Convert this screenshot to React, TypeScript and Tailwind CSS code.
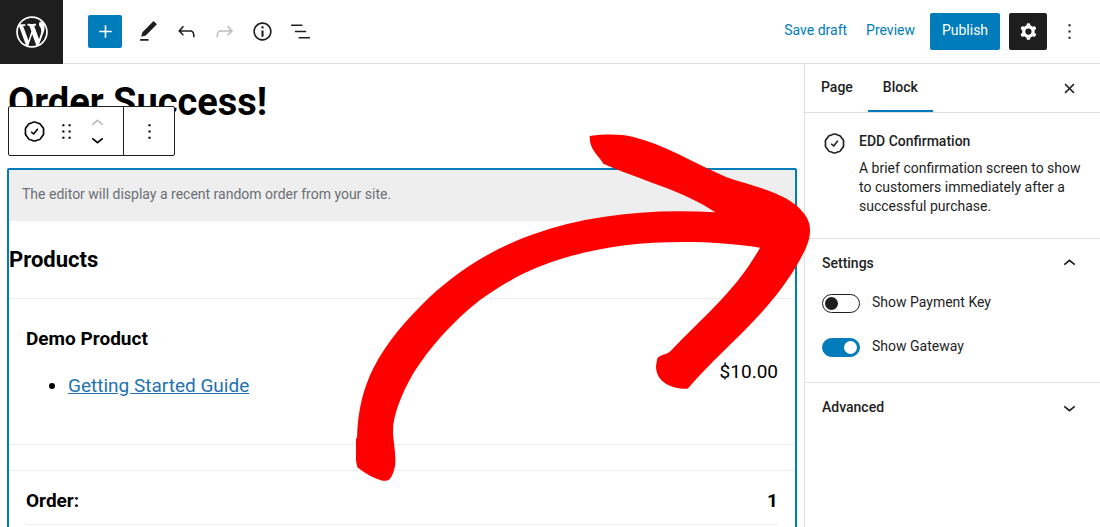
import { useState, type ReactNode } from "react";

const PATHS = {
  plus: "M18 11.2h-5.2V6h-1.6v5.2H6v1.6h5.2V18h1.6v-5.2H18z",
  pencil: "M20.1 5.1L16.9 2 6.2 12.7l-1.3 4.4 4.5-1.3L20.1 5.1zM4 20.8h8v-1.5H4v1.5z",
  undo: "M18.3 11.7c-.6-.6-1.4-.9-2.3-.9H6.7l2.9-3.3-1.1-1-4.5 5L8.5 16l1-1-2.7-2.7H16c.5 0 .9.2 1.3.5 1 1 1 3.4 1 4.5v.3h1.5v-.2c0-1.5 0-4.3-1.5-5.7z",
  redo: "M15.6 6.5l-1.1 1 2.9 3.3H8c-.9 0-1.7.3-2.3.9-1.4 1.5-1.4 4.2-1.4 5.6v.2h1.5v-.3c0-1.1 0-3.5 1-4.5.3-.3.7-.5 1.3-.5h9.2L14.5 15l1.1 1.1 4.6-4.6-4.6-5z",
  info: "M12 3.2c-4.8 0-8.8 3.9-8.8 8.8 0 4.8 3.9 8.8 8.8 8.8 4.8 0 8.8-3.9 8.8-8.8 0-4.8-4-8.8-8.8-8.8zm0 16c-4 0-7.2-3.3-7.2-7.2C4.8 8 8 4.8 12 4.8s7.2 3.3 7.2 7.2c0 4-3.2 7.2-7.2 7.2zM11 17h2v-6h-2v6zm0-8h2V7h-2v2z",
  list: "M13.8 5.2H3v1.5h10.8V5.2zm-3.6 12v1.5H21v-1.5H10.2zm7.2-6H6.6v1.5h10.8v-1.5z",
  cog: "M10.289 4.836A1 1 0 0111.275 4h1.306a1 1 0 01.987.836l.244 1.466c.787.26 1.503.679 2.108 1.218l1.393-.522a1 1 0 011.216.437l.653 1.13a1 1 0 01-.23 1.273l-1.148.944a6.025 6.025 0 010 2.435l1.149.946a1 1 0 01.23 1.272l-.653 1.13a1 1 0 01-1.216.437l-1.394-.522c-.605.54-1.32.958-2.108 1.218l-.244 1.466a1 1 0 01-.987.836h-1.306a1 1 0 01-.986-.836l-.244-1.466a5.995 5.995 0 01-2.108-1.218l-1.394.522a1 1 0 01-1.217-.436l-.653-1.131a1 1 0 01.23-1.272l1.149-.946a6.026 6.026 0 010-2.435l-1.148-.944a1 1 0 01-.23-1.272l.653-1.131a1 1 0 011.217-.437l1.393.522a5.994 5.994 0 012.108-1.218l.244-1.466zM14.929 12a3 3 0 11-6 0 3 3 0 016 0z",
  more: "M13 19h-2v-2h2v2zm0-6h-2v-2h2v2zm0-6h-2V5h2v2z",
  close: "M12 13.06l3.712 3.713 1.061-1.06L13.061 12l3.712-3.712-1.06-1.06L12 10.938 8.288 7.227l-1.061 1.06L10.939 12l-3.712 3.712 1.06 1.061L12 13.061z",
  drag: "M8 7h2V5H8v2zm0 6h2v-2H8v2zm0 6h2v-2H8v2zm6-14v2h2V5h-2zm0 8h2v-2h-2v2zm0 6h2v-2h-2v2z",
  up: "M6.5 12.4L12 8l5.5 4.4-.9 1.2L12 10l-4.5 3.6-1-1.2z",
  down: "M17.5 11.6L12 16l-5.5-4.4.9-1.2L12 14l4.5-3.6 1 1.2z",
};

function Icon({ name, className = "size-[25px]" }: { name: keyof typeof PATHS; className?: string }) {
  return (
    <svg viewBox="0 0 24 24" className={className} fill="currentColor" fillRule="evenodd" aria-hidden="true">
      <path d={PATHS[name]} />
    </svg>
  );
}

function SealIcon() {
  return (
    <svg viewBox="0 0 24 24" className="size-[25px] shrink-0" fill="none" stroke="currentColor" strokeWidth="1.5" strokeLinejoin="round" aria-hidden="true">
      <path d="M20.6 12A4.7 4.7 0 0 1 18.96 17.05A4.7 4.7 0 0 1 14.66 20.18A4.7 4.7 0 0 1 9.34 20.18A4.7 4.7 0 0 1 5.04 17.05A4.7 4.7 0 0 1 3.4 12A4.7 4.7 0 0 1 5.04 6.95A4.7 4.7 0 0 1 9.34 3.82A4.7 4.7 0 0 1 14.66 3.82A4.7 4.7 0 0 1 18.96 6.95A4.7 4.7 0 0 1 20.6 12Z" />
      <path d="M8.8 12.2L11.2 14.4L15.2 9.3" />
    </svg>
  );
}

function WordPressLogo() {
  return (
    <svg viewBox="-2 -2 24 24" className="size-[38px]" fill="currentColor" aria-hidden="true">
      <path d="M20 10c0-5.51-4.49-10-10-10C4.48 0 0 4.49 0 10c0 5.52 4.48 10 10 10 5.51 0 10-4.48 10-10zM7.78 15.37L4.37 6.22c.55-.02 1.17-.08 1.17-.08.5-.06.44-1.13-.06-1.11 0 0-1.45.11-2.37.11-.18 0-.37 0-.58-.01C4.12 2.69 6.87 1.11 10 1.11c2.33 0 4.45.87 6.05 2.34-.68-.11-1.65.39-1.65 1.58 0 .74.45 1.36.9 2.1.35.61.55 1.36.55 2.46 0 1.49-1.4 5-1.4 5l-3.03-8.37c.54-.02.82-.17.82-.17.5-.05.44-1.25-.06-1.22 0 0-1.44.12-2.38.12-.87 0-2.33-.12-2.33-.12-.5-.03-.56 1.2-.06 1.22l.92.08 1.26 3.41zM17.41 10c.24-.64.74-1.87.43-4.25.7 1.29 1.05 2.71 1.05 4.25 0 3.29-1.73 6.24-4.4 7.78.97-2.59 1.94-5.2 2.92-7.78zM6.1 18.09C3.12 16.65 1.11 13.53 1.11 10c0-1.3.23-2.48.72-3.59C3.25 10.3 4.67 14.2 6.1 18.09zm4.03-6.63l2.58 6.98c-.86.29-1.76.45-2.71.45-.79 0-1.57-.11-2.29-.33.81-2.38 1.62-4.74 2.42-7.1z" />
    </svg>
  );
}

function ToolButton({ label, children, disabled }: { label: string; children: ReactNode; disabled?: boolean }) {
  return (
    <button type="button" aria-label={label} disabled={disabled} className="flex h-9 w-[38px] items-center justify-center disabled:text-[#bdbdbd]">
      {children}
    </button>
  );
}

function Header() {
  return (
    <header className="flex h-16 shrink-0 items-stretch">
      <a href="#dashboard" aria-label="View pages" className="flex w-[63px] items-center justify-center bg-[#1e1e1e] text-white">
        <WordPressLogo />
      </a>
      <div className="flex flex-1 items-center justify-between border-b border-[#e0e0e0] pl-[25px] pr-3">
        <div className="flex items-center">
          <button type="button" aria-label="Add block" className="mr-[7px] flex h-[33px] w-[34px] items-center justify-center rounded-xs bg-[#007cba] text-white">
            <Icon name="plus" />
          </button>
          <ToolButton label="Tools"><Icon name="pencil" /></ToolButton>
          <ToolButton label="Undo"><Icon name="undo" /></ToolButton>
          <ToolButton label="Redo" disabled><Icon name="redo" /></ToolButton>
          <ToolButton label="Details"><Icon name="info" /></ToolButton>
          <ToolButton label="List view"><Icon name="list" /></ToolButton>
        </div>
        <div className="flex items-center">
          <button type="button" className="mr-[19px] pb-0.5 text-[#007cba]">Save draft</button>
          <button type="button" className="mr-[15px] pb-0.5 text-[#007cba]">Preview</button>
          <button type="button" className="mr-[9px] h-[37px] w-[70px] rounded-xs bg-[#007cba] pb-0.5 text-white">Publish</button>
          <button type="button" aria-label="Settings" className="mr-[3px] flex h-[37px] w-[38px] items-center justify-center rounded-xs bg-[#1e1e1e] text-white">
            <Icon name="cog" />
          </button>
          <ToolButton label="Options"><Icon name="more" /></ToolButton>
        </div>
      </div>
    </header>
  );
}

function BlockToolbar() {
  return (
    <div role="toolbar" aria-label="Block tools" className="absolute left-2 top-[42px] flex h-[50px] items-stretch rounded-xs border border-[#1e1e1e] bg-white">
      <div className="flex w-[115px] items-center border-r border-[#1e1e1e] pl-[13px]">
        <button type="button" aria-label="EDD Confirmation"><SealIcon /></button>
        <button type="button" aria-label="Drag" className="ml-[7px]"><Icon name="drag" /></button>
        <div className="ml-[6px] flex flex-col">
          <button type="button" aria-label="Move up" className="flex h-4 items-center overflow-hidden text-[#bdbdbd]"><Icon name="up" /></button>
          <button type="button" aria-label="Move down" className="flex h-[15px] items-center overflow-hidden"><Icon name="down" /></button>
        </div>
      </div>
      <button type="button" aria-label="More options" className="flex w-[50px] items-center justify-center"><Icon name="more" /></button>
    </div>
  );
}

function Canvas() {
  return (
    <main className="relative min-w-0 flex-1 overflow-hidden pl-[7px] pr-[7px] pt-[14px] text-black">
      <h1 className="pl-px text-[38px] font-bold leading-[48px]">Order Success!</h1>
      <BlockToolbar />
      <section className="mt-[42px] min-h-screen rounded-xs border-2 border-[#007cba]">
        <p className="bg-[#eee] px-[13px] pb-[17px] pt-[15px] leading-[19px] text-[#6b6f75]">
          The editor will display a recent random order from your site.
        </p>
        <h2 className="pb-6 pt-6 text-[22px] font-bold leading-[29px]">Products</h2>
        <div className="flex items-center border-y border-[#eee] px-[17px] pb-7 pt-[27px] text-[19px] leading-[26px]">
          <div className="flex-1">
            <h3 className="font-bold">Demo Product</h3>
            <ul className="mt-[21px] list-disc pb-[17px] pl-[42px]">
              <li><a href="#guide" className="text-[#2271b1] underline">Getting Started Guide</a></li>
            </ul>
          </div>
          <div className="pt-px">$10.00</div>
        </div>
        <div className="mt-[25px] border-t border-[#eee] px-[17px]">
          <div className="flex justify-between border-b border-[#eee] pb-[10px] pt-[17px] text-[19px] font-bold leading-[26px]">
            <span>Order:</span>
            <span>1</span>
          </div>
        </div>
      </section>
    </main>
  );
}

function Toggle({ label, initial }: { label: string; initial: boolean }) {
  const [on, setOn] = useState(initial);
  return (
    <label className="flex items-center gap-3">
      <input type="checkbox" role="switch" checked={on} onChange={() => setOn(!on)} className="peer sr-only" />
      <span className="flex h-[19px] w-[38px] items-center rounded-full border border-[#1e1e1e] px-[2px] text-[#1e1e1e] peer-checked:justify-end peer-checked:border-[#007cba] peer-checked:bg-[#007cba] peer-checked:text-white">
        <span className="size-[13px] rounded-full bg-current" />
      </span>
      <span className="pb-0.5 leading-[18px]">{label}</span>
    </label>
  );
}

function Sidebar() {
  return (
    <aside className="w-[296px] shrink-0 border-l border-[#e0e0e0] bg-white">
      <div className="flex h-[49px] items-stretch justify-between border-b border-[#e0e0e0] pr-[18px] font-medium">
        <div role="tablist" className="flex">
          <button type="button" role="tab" aria-selected="false" className="border-b-2 border-transparent pl-4 pr-[15px]">Page</button>
          <button type="button" role="tab" aria-selected="true" className="border-b-2 border-[#007cba] px-[15px]">Block</button>
        </div>
        <button type="button" aria-label="Close settings"><Icon name="close" /></button>
      </div>
      <div className="flex gap-3 border-b border-[#e0e0e0] pb-[22px] pl-[17px] pr-4 pt-[18px]">
        <SealIcon />
        <div>
          <h2 className="font-medium leading-5">EDD Confirmation</h2>
          <p className="mt-2 leading-[19px]">A brief confirmation screen to show to customers immediately after a successful purchase.</p>
        </div>
      </div>
      <section className="border-b border-[#e0e0e0] pl-[17px] pr-[18px]">
        <button type="button" aria-expanded="true" className="flex h-[50px] w-full items-center justify-between pb-0.5 font-medium">
          Settings
          <Icon name="up" />
        </button>
        <div className="flex flex-col gap-6 pb-[25px] pt-1">
          <Toggle label="Show Payment Key" initial={false} />
          <Toggle label="Show Gateway" initial />
        </div>
      </section>
      <section className="pl-[17px] pr-[18px]">
        <button type="button" aria-expanded="false" className="flex h-[50px] w-full items-center justify-between pb-0.5 font-medium">
          Advanced
          <Icon name="down" />
        </button>
      </section>
    </aside>
  );
}

function Arrow() {
  return (
    <svg viewBox="0 0 1440 1140" className="pointer-events-none absolute left-[340px] top-[120px] h-[380px] w-[480px]" fill="#ff0000" aria-hidden="true">
      <path d="M749 48C800 42 840 42 880 51C970 72 1060 128 1158 171C1230 197 1310 210 1368 255C1400 285 1410 305 1410 330C1410 370 1390 400 1368 440C1270 600 1150 680 1043 806C1000 808 948 790 948 738L952 715C962 702 980 705 992 693C1090 590 1190 510 1260 383C1190 372 1110 366 1030 366C900 366 790 380 680 412C590 438 510 475 420 540C340 603 270 680 220 760C183 825 157 890 159 940C161 975 172 1020 162 1050C152 1085 140 1083 128 1082C105 1078 75 1060 52 1042L48 1022V955H51C53 870 70 805 100 745C140 665 200 598 270 530C360 448 460 385 580 343C740 285 930 265 1126 277C1040 215 900 180 790 131C775 105 748 90 749 48Z" />
    </svg>
  );
}

export default function App() {
  return (
    <div className="relative flex h-screen flex-col overflow-hidden bg-white font-['Roboto',sans-serif] text-[14px] text-[#1e1e1e]">
      <Header />
      <div className="flex min-h-0 flex-1">
        <Canvas />
        <Sidebar />
      </div>
      <Arrow />
    </div>
  );
}
